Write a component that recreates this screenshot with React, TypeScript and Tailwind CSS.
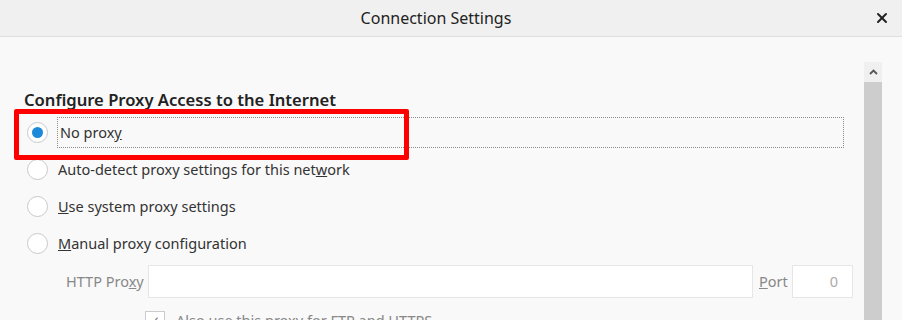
import { X } from "lucide-react";

const Radio = ({ checked }: { checked?: boolean }) => (
  <span className="flex h-[21px] w-[21px] shrink-0 items-center justify-center rounded-full border border-[#c9c9c9] bg-white">
    {checked && <span className="h-[11px] w-[11px] rounded-full bg-[#1c8ad9]" />}
  </span>
);

export default function App() {
  return (
    <div className="flex h-[320px] w-[902px] flex-col overflow-hidden bg-[#f9f9f9] font-['Noto_Sans','Open_Sans',sans-serif] text-[#333]">
      <div className="relative flex h-[37px] shrink-0 items-center justify-center border-b border-[#dfdfdf] bg-[#f0f0f0] pr-[30px]">
        <span className="text-[16px] text-[#222]">Connection Settings</span>
        <X className="absolute right-[12px] top-[10px] h-[16px] w-[16px] text-[#222]" strokeWidth={3} />
      </div>

      <div className="flex flex-1">
        <div className="flex-1 pl-[24px] pt-[52px]">
          <h2 className="text-[16.6px] font-semibold leading-[22px] text-[#222]">Configure Proxy Access to the Internet</h2>

          <div className="mt-[6px] flex flex-col gap-[16px] pl-[3px] text-[14.5px]">
            <div className="relative flex h-[31px] items-center gap-[9px]">
              <div className="absolute left-[-13px] top-[-8px] h-[51px] w-[395px] rounded-[2px] border-[5px] border-[#ff0000]" />
              <Radio checked />
              <div className="mr-[20px] flex h-[31px] flex-1 items-center border border-dotted border-[#8c8c8c] pl-[2px]">
                No prox<span className="underline">y</span>
              </div>
            </div>
            <div className="-mt-[5px] flex h-[21px] items-center gap-[10px]">
              <Radio />
              <span>Auto-detect proxy settings for this net<span className="underline">w</span>ork</span>
            </div>
            <div className="flex h-[21px] items-center gap-[10px]">
              <Radio />
              <span><span className="underline">U</span>se system proxy settings</span>
            </div>
            <div className="flex h-[21px] items-center gap-[10px]">
              <Radio />
              <span><span className="underline">M</span>anual proxy configuration</span>
            </div>
          </div>

          <div className="mt-[11px] flex h-[33px] items-center pl-[42px] text-[14.5px] text-[#888]">
            <span className="w-[82px]">HTTP Pro<span className="underline">x</span>y</span>
            <div className="h-[33px] w-[605px] border border-[#e6e6e6] bg-white" />
            <span className="ml-[6px] w-[33px]"><span className="underline">P</span>ort</span>
            <div className="flex h-[33px] w-[61px] items-center justify-end border border-[#e6e6e6] bg-white pr-[14px] text-[#aaa]">0</div>
          </div>

          <div className="mt-[12px] flex items-center gap-[11px] pl-[121px] text-[14.5px] text-[#888]">
            <span className="flex h-[20px] w-[20px] items-center justify-center border border-[#ccc] bg-white text-[12px] text-[#777]">✓</span>
            <span>Also use this proxy for FTP and HTTPS</span>
          </div>
        </div>

        <div className="mr-[20px] mt-[25px] flex w-[18px] flex-col">
          <div className="flex h-[20px] items-center justify-center bg-[#f0f0f0]">
            <svg width="9" height="6" viewBox="0 0 9 6">
              <path d="M1 5 L4.5 1.5 L8 5" fill="none" stroke="#555" strokeWidth="1.8" />
            </svg>
          </div>
          <div className="flex-1 bg-[#cdcdcd]" />
        </div>
      </div>
    </div>
  );
}
